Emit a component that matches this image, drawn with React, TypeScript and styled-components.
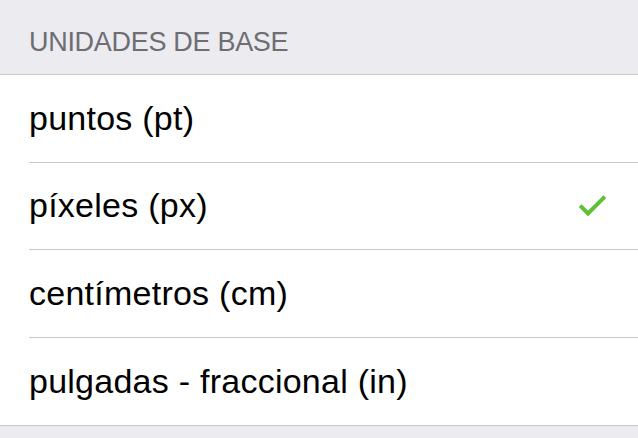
import React from "react";
import styled, { createGlobalStyle } from "styled-components";

const GlobalStyle = createGlobalStyle`
  html, body {
    margin: 0;
    padding: 0;
    background: #ebebf0;
  }
  body {
    font-family: "Liberation Sans", Arial, sans-serif;
  }
`;

const Page = styled.div`
  width: 638px;
  height: 438px;
  background-color: #ebebf0;
  overflow: hidden;
`;

const SectionHeader = styled.div`
  height: 75px;
  box-sizing: border-box;
  padding: 27px 0 0 29px;
  font-size: 27px;
  color: #6d6d72;
  letter-spacing: -0.3px;
  border-bottom: 1px solid #c8c7cc;
`;

const List = styled.ul`
  list-style: none;
  margin: 0;
  padding: 0;
  background-color: #ffffff;
  border-bottom: 1px solid #c8c7cc;
`;

const Row = styled.li`
  height: 87.5px;
  box-sizing: border-box;
  padding-left: 29px;
  display: flex;
`;

const RowInner = styled.div<{ $last: boolean }>`
  flex: 1;
  display: flex;
  align-items: center;
  justify-content: space-between;
  padding-right: 32px;
  border-bottom: ${(p) => (p.$last ? "none" : "1px solid #c8c7cc")};
`;

const Label = styled.span`
  font-size: 34px;
  color: #000000;
  letter-spacing: 0.25px;
`;

const Check = () => (
  <svg width="27" height="21" viewBox="0 0 27 21">
    <path
      d="M2.5 12 L9 18.5 L24.5 3"
      fill="none"
      stroke="#5fbf35"
      strokeWidth="4"
      strokeLinecap="square"
    />
  </svg>
);

const units = [
  { label: "puntos (pt)", selected: false },
  { label: "píxeles (px)", selected: true },
  { label: "centímetros (cm)", selected: false },
  { label: "pulgadas - fraccional (in)", selected: false },
];

const App: React.FC = () => {
  return (
    <>
      <GlobalStyle />
      <Page>
        <SectionHeader>UNIDADES DE BASE</SectionHeader>
        <List>
          {units.map((u, i) => (
            <Row key={u.label}>
              <RowInner $last={i === units.length - 1}>
                <Label>{u.label}</Label>
                {u.selected && <Check />}
              </RowInner>
            </Row>
          ))}
        </List>
      </Page>
    </>
  );
};

export default App;
